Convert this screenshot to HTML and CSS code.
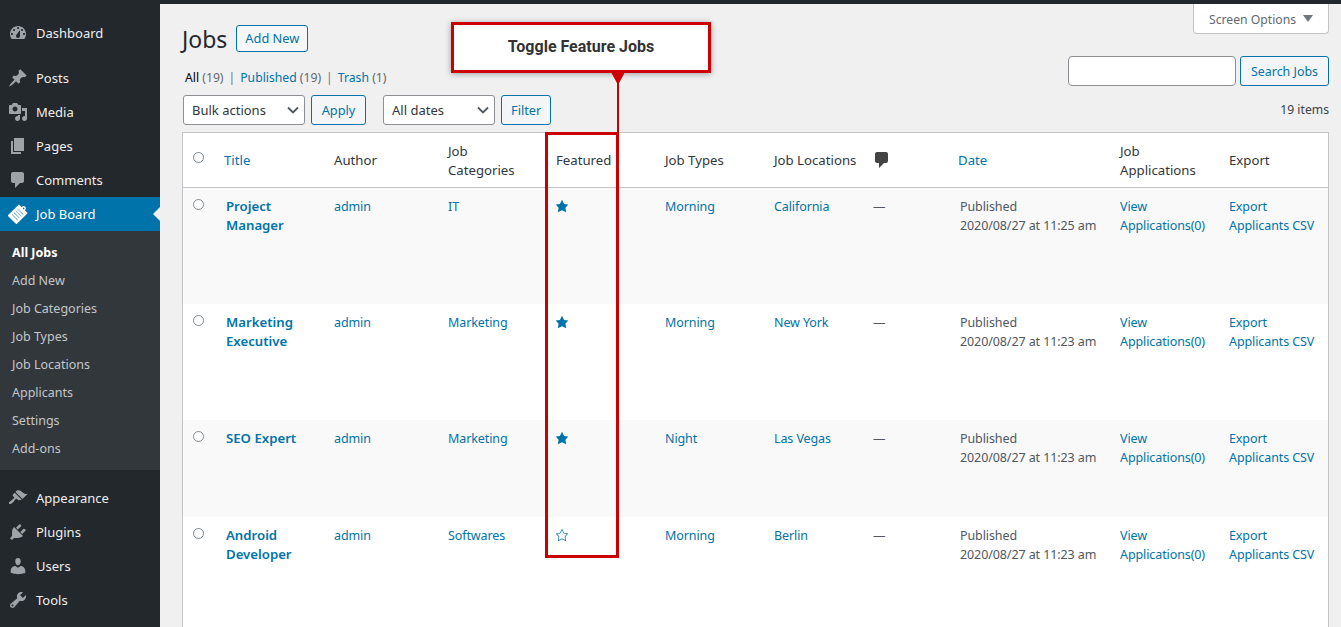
FILE: index.html
```html
<!DOCTYPE html>
<html lang="en">
<head>
<meta charset="utf-8">
<title>Jobs</title>
<link rel="stylesheet" href="styles.css">
</head>
<body>
<div class="adminbar"></div>
<div class="wrap-all">
<aside class="sidebar">
  <ul class="menu">
    <li class="item"><svg class="ic" viewBox="0 0 20 20"><path d="M3.76 16h12.48c1.1-1.37 1.76-3.11 1.76-5 0-4.42-3.58-8-8-8s-8 3.58-8 8c0 1.89.66 3.63 1.76 5zM10 4c.55 0 1 .45 1 1s-.45 1-1 1-1-.45-1-1 .45-1 1-1zM6 6c.55 0 1 .45 1 1s-.45 1-1 1-1-.45-1-1 .45-1 1-1zm8 0c.55 0 1 .45 1 1s-.45 1-1 1-1-.45-1-1 .45-1 1-1zm-5.37 5.55L12 7v6c0 1.1-.9 2-2 2s-2-.9-2-2c0-.57.24-1.08.63-1.45zM4 10c.55 0 1 .45 1 1s-.45 1-1 1-1-.45-1-1 .45-1 1-1zm12 0c.55 0 1 .45 1 1s-.45 1-1 1-1-.45-1-1 .45-1 1-1z"/></svg>Dashboard</li>
  </ul>
  <ul class="menu menu-gap">
    <li class="item"><svg class="ic" viewBox="0 0 20 20"><path d="M10.44 3.02l1.82-1.82 6.36 6.35-1.83 1.82c-1.05-.68-2.48-.57-3.41.36l-.75.75c-.92.93-1.04 2.35-.35 3.41l-1.83 1.82-2.41-2.41-2.8 2.79c-.42.42-3.38 2.71-3.8 2.29s1.86-3.39 2.28-3.81l2.79-2.79L4.1 9.36l1.83-1.82c1.05.69 2.48.57 3.4-.36l.75-.75c.93-.92 1.05-2.35.36-3.41z"/></svg>Posts</li>
    <li class="item"><svg class="ic" viewBox="0 0 20 20"><path d="M13 11V4c0-.55-.45-1-1-1h-1.67L9 1H5L3.67 3H2c-.55 0-1 .45-1 1v7c0 .55.45 1 1 1h10c.55 0 1-.45 1-1zM7 4.5c1.38 0 2.5 1.12 2.5 2.5S8.38 9.5 7 9.5 4.5 8.38 4.5 7 5.62 4.5 7 4.5zM14 6h5v10.5c0 1.38-1.12 2.5-2.5 2.5S14 17.88 14 16.5s1.12-2.5 2.5-2.5c.17 0 .34.02.5.05V9h-3V6zm-4 8.05V13h2v3.5c0 1.38-1.12 2.5-2.5 2.5S7 17.88 7 16.5 8.12 14 9.5 14c.17 0 .34.02.5.05z"/></svg>Media</li>
    <li class="item"><svg class="ic" viewBox="0 0 20 20"><path d="M6 15V2h10v13H6zm-1 1h8v2H3V5h2v11z"/></svg>Pages</li>
    <li class="item"><svg class="ic" viewBox="0 0 20 20"><path d="M5 2h9c1.1 0 2 .9 2 2v7c0 1.1-.9 2-2 2h-2l-5 5v-5H5c-1.1 0-2-.9-2-2V4c0-1.1.9-2 2-2z"/></svg>Comments</li>
    <li class="item current"><svg class="ic" viewBox="0 0 20 20"><g transform="rotate(45 10 10)"><path fill-rule="evenodd" d="M4.6 2.5h3.2V2a2.2 2.2 0 0 1 4.4 0v.5h3.200a.8.8 0 0 1 .8.8v14.400a.8.8 0 0 1-.8.8H4.600a.8.8 0 0 1-.8-.8V3.300a.8.8 0 0 1 .8-.8zM10 1.200a.8.8 0 1 0 0 1.600.8.8 0 0 0 0-1.600zM6 6.500v.4h8v-.4zm0 2.600v.4h8v-.4zm0 2.600v.4h8v-.4zm0 2.600v.4h8v-.4z"/></g></svg>Job Board</li>
  </ul>
  <ul class="submenu">
    <li class="sub active">All Jobs</li>
    <li class="sub">Add New</li>
    <li class="sub">Job Categories</li>
    <li class="sub">Job Types</li>
    <li class="sub">Job Locations</li>
    <li class="sub">Applicants</li>
    <li class="sub">Settings</li>
    <li class="sub">Add-ons</li>
  </ul>
  <ul class="menu menu-gap2">
    <li class="item"><svg class="ic" viewBox="0 0 20 20"><path d="M14.48 11.06L7.41 3.99l1.5-1.5c.5-.56 2.3-.47 3.51.32 1.21.8 1.43 1.28 2.91 2.1 1.18.64 2.45 1.26 4.45.85zm-.71.71L6.7 4.7 4.93 6.47c-.39.39-.39 1.02 0 1.41l1.06 1.06c.39.39.39 1.03 0 1.42-.6.6-1.43 1.11-2.21 1.69-.35.26-.7.53-1.01.84C1.43 13.23.4 14.98 1.2 15.8c.82.81 2.57-.23 3.91-1.57.31-.31.58-.66.84-1.01.58-.78 1.09-1.61 1.69-2.21.39-.39 1.02-.39 1.41 0l1.06 1.06c.39.39 1.02.39 1.41 0z"/></svg>Appearance</li>
    <li class="item"><svg class="ic" viewBox="0 0 20 20"><path d="M13.11 4.36L9.87 7.6 8 5.73l3.24-3.24c.35-.34 1.05-.2 1.56.32.52.51.66 1.21.31 1.55zm-8 1.77l.91-1.12 9.01 9.01-1.19.84c-.71.71-2.63 1.16-3.82 1.16H6.14L4.9 17.26c-.59.59-1.54.59-2.12 0-.59-.58-.59-1.53 0-2.12l1.24-1.24v-3.88c0-1.13.4-3.19 1.09-3.89zm7.26 3.97l3.24-3.24c.34-.35 1.04-.21 1.55.31.52.51.66 1.21.31 1.55l-3.24 3.25z"/></svg>Plugins</li>
    <li class="item"><svg class="ic" viewBox="0 0 20 20"><path d="M10 9.25c-2.27 0-2.73-3.44-2.73-3.44C7 4.02 7.82 2 9.97 2c2.16 0 2.98 2.02 2.71 3.81 0 0-.41 3.44-2.68 3.44zm0 2.57L12.72 10c2.39 0 4.52 2.33 4.52 4.53v2.49s-3.65 1.13-7.24 1.13c-3.65 0-7.24-1.13-7.24-1.13v-2.49c0-2.25 1.94-4.48 4.47-4.48z"/></svg>Users</li>
    <li class="item"><svg class="ic" viewBox="0 0 20 20"><path d="M16.68 9.77c-1.34 1.34-3.3 1.67-4.95.99l-5.41 6.52c-.99.99-2.59.99-3.58 0s-.99-2.59 0-3.57l6.52-5.42c-.68-1.65-.35-3.61.99-4.95 1.28-1.28 3.12-1.62 4.72-1.06l-2.89 2.89 2.82 2.82 2.86-2.87c.53 1.58.18 3.39-1.08 4.65zM3.81 16.21c.4.39 1.04.39 1.43 0 .4-.4.4-1.04 0-1.43-.39-.4-1.03-.4-1.43 0-.39.39-.39 1.03 0 1.43z"/></svg>Tools</li>
  </ul>
</aside>
<main class="content">
  <div class="screen-row"><button class="screen-options">Screen Options<span class="caret"></span></button></div>
  <div class="head-row">
    <h1 class="title">Jobs</h1><a class="add-new">Add New</a>
  </div>
  <div class="sub-row">
    <ul class="views">
      <li><b class="cur">All</b> <span class="cnt">(19)</span></li>
      <li class="sep">|</li>
      <li><a>Published</a> <span class="cnt">(19)</span></li>
      <li class="sep">|</li>
      <li><a>Trash</a> <span class="cnt">(1)</span></li>
    </ul>
    <div class="search"><input class="search-input" type="text" aria-label="Search"><button class="btn search-btn">Search Jobs</button></div>
  </div>
  <div class="nav-row">
    <div class="filters">
      <div class="select sel-bulk">Bulk actions<svg class="chev" viewBox="0 0 16 16"><path d="M3 5.500l5 5 5-5"/></svg></div>
      <button class="btn btn-apply">Apply</button>
      <div class="select sel-dates">All dates<svg class="chev" viewBox="0 0 16 16"><path d="M3 5.500l5 5 5-5"/></svg></div>
      <button class="btn">Filter</button>
    </div>
    <span class="items">19 items</span>
  </div>
  <table class="jobs">
    <thead>
      <tr>
        <th class="c-check"><span class="radio"></span></th>
        <th class="c-title"><a>Title</a></th>
        <th class="c-author">Author</th>
        <th class="c-cat">Job Categories</th>
        <th class="c-feat">Featured</th>
        <th class="c-type">Job Types</th>
        <th class="c-loc">Job Locations</th>
        <th class="c-com"><svg class="com-ic" viewBox="0 0 20 20"><path d="M5 2h9c1.1 0 2 .9 2 2v7c0 1.1-.9 2-2 2h-2l-5 5v-5H5c-1.100 0-2-.9-2-2V4c0-1.100.9-2 2-2z"/></svg></th>
        <th class="c-date"><a>Date</a></th>
        <th class="c-app">Job Applications</th>
        <th class="c-exp">Export</th>
      </tr>
    </thead>
    <tbody>
      <tr class="alt r-tall">
        <td><span class="radio"></span></td>
        <td><a class="job">Project Manager</a></td>
        <td><a>admin</a></td><td><a>IT</a></td>
        <td><svg class="star" viewBox="0 0 20 20"><path d="M10 1l3 6 6 .75-4.12 4.62L16 19l-6-3-6 3 1.13-6.63L1 7.750 7 7z"/></svg></td>
        <td><a>Morning</a></td><td><a>California</a></td><td class="td-com">—</td>
        <td class="td-date">Published<br>2020/08/27 at 11:25 am</td>
        <td><a>View Applications(0)</a></td><td><a>Export Applicants CSV</a></td>
      </tr>
      <tr class="r-tall">
        <td><span class="radio"></span></td>
        <td><a class="job">Marketing Executive</a></td>
        <td><a>admin</a></td><td><a>Marketing</a></td>
        <td><svg class="star" viewBox="0 0 20 20"><path d="M10 1l3 6 6 .75-4.12 4.62L16 19l-6-3-6 3 1.13-6.63L1 7.750 7 7z"/></svg></td>
        <td><a>Morning</a></td><td><a>New York</a></td><td class="td-com">—</td>
        <td class="td-date">Published<br>2020/08/27 at 11:23 am</td>
        <td><a>View Applications(0)</a></td><td><a>Export Applicants CSV</a></td>
      </tr>
      <tr class="alt r-short">
        <td><span class="radio"></span></td>
        <td><a class="job">SEO Expert</a></td>
        <td><a>admin</a></td><td><a>Marketing</a></td>
        <td><svg class="star" viewBox="0 0 20 20"><path d="M10 1l3 6 6 .75-4.12 4.62L16 19l-6-3-6 3 1.13-6.63L1 7.750 7 7z"/></svg></td>
        <td><a>Night</a></td><td><a>Las Vegas</a></td><td class="td-com">—</td>
        <td class="td-date">Published<br>2020/08/27 at 11:23 am</td>
        <td><a>View Applications(0)</a></td><td><a>Export Applicants CSV</a></td>
      </tr>
      <tr class="r-last">
        <td><span class="radio"></span></td>
        <td><a class="job">Android Developer</a></td>
        <td><a>admin</a></td><td><a>Softwares</a></td>
        <td><svg class="star" viewBox="0 0 20 20"><path d="M10 1L7 7l-6 .75 4.130 4.620L4 19l6-3 6 3-1.120-6.630L19 7.750 13 7zm0 2.240l2.340 4.690 4.650.58-3.180 3.560.87 5.150L10 14.880l-4.680 2.340.87-5.150-3.180-3.560 4.650-.58z"/></svg></td>
        <td><a>Morning</a></td><td><a>Berlin</a></td><td class="td-com">—</td>
        <td class="td-date">Published<br>2020/08/27 at 11:23 am</td>
        <td><a>View Applications(0)</a></td><td><a>Export Applicants CSV</a></td>
      </tr>
    </tbody>
  </table>
</main>
</div>
<div class="callout">Toggle Feature Jobs</div>
<div class="pointer"></div>
<div class="pointer-line"></div>
<div class="highlight"></div>
</body>
</html>
```
FILE: styles.css
```css
* { box-sizing: border-box; }
html, body { margin: 0; padding: 0; }
body {
  height: 627px;
  overflow: hidden;
  position: relative;
  background: #f0f0f1;
  color: #3c434a;
  font: 13px/19px "Noto Sans", sans-serif;
}
ul { list-style: none; margin: 0; padding: 0; }
a { color: #0073aa; text-decoration: none; }
.adminbar { height: 4px; background: #23282d; }
.wrap-all { display: flex; height: 623px; }

.sidebar { width: 160px; flex: none; background: #23282d; color: #eee; }
.menu { padding: 0; }
.menu:first-child { margin-top: 12px; }
.menu-gap { margin-top: 11px; }
.menu-gap2 { margin-top: 11px; }
.item {
  position: relative;
  display: flex;
  align-items: center;
  gap: 8px;
  height: 34px;
  padding-left: 8px;
  font-size: 13px;
}
.ic { width: 20px; height: 20px; flex: none; fill: #9ea3a8; }
.current { background: #0073aa; color: #fff; }
.current .ic { fill: #fff; }
.current::after {
  content: "";
  position: absolute;
  right: 0;
  top: 10px;
  border: 7px solid transparent;
  border-right-color: #f0f0f1;
  border-left-width: 0;
}
.submenu { background: #32373c; padding: 8px 0 7px; }
.sub { height: 28px; line-height: 28px; padding-left: 12px; color: #c3c6c9; font-size: 12.5px; }
.active { color: #fff; font-weight: 700; }

.content { flex: 1; min-width: 0; padding: 0 12px 0 22px; position: relative; }
.screen-row { display: flex; justify-content: flex-end; height: 0; }
.screen-options {
  width: 136px;
  height: 30px;
  background: #fff;
  border: 1px solid #c3c4c7;
  border-top: 0;
  border-radius: 0 0 4px 4px;
  color: #646970;
  font: 12.2px "Noto Sans", sans-serif;
  padding: 1px 0 0;
  display: flex;
  align-items: center;
  justify-content: center;
  gap: 7px;
}
.caret { border: 5px solid transparent; border-top: 7px solid #72777c; border-bottom: 0; margin-top: -1px; }
.head-row { display: flex; align-items: center; gap: 9px; padding-top: 22px; height: 48px; }
.title { margin: 0; font: 400 23px/27px "Noto Sans", sans-serif; color: #23282d; }
.add-new {
  height: 27px; line-height: 25px; padding: 0 8px; margin-top: -2px;
  border: 1px solid #0073aa; border-radius: 3px;
  background: #f6f7f7; color: #0073aa; font-size: 12.8px;
}
.sub-row { display: flex; justify-content: space-between; align-items: flex-start; padding-top: 3px; height: 38px; }
.views { display: flex; gap: 5px; padding: 13px 0 0 3px; font-size: 12.2px; line-height: 19px; }
.cur { font-weight: 400; color: #000; }
.cnt { color: #646970; }
.sep { color: #72777c; }
.search { display: flex; gap: 4px; padding-top: 1px; }
.search-input { width: 168px; height: 30px; border: 1px solid #8c8f94; border-radius: 4px; background: #fff; padding: 0; }
.btn {
  height: 30px; padding: 0 9px;
  border: 1px solid #0073aa; border-radius: 3px;
  background: #f3f5f6; color: #0073aa;
  font: 12.8px "Noto Sans", sans-serif;
}
.btn-apply { width: 55px; padding: 0; }
.search-btn { width: 89px; padding: 0; font-size: 12.4px; }
.nav-row { display: flex; justify-content: space-between; align-items: center; height: 30px; margin-top: 5px; }
.filters { display: flex; align-items: center; gap: 6px; padding-left: 1px; }
.select {
  display: flex; align-items: center; justify-content: space-between;
  height: 30px; padding: 0 3px 0 8px;
  border: 1px solid #8c8f94; border-radius: 3px;
  background: #fff; color: #32373c; font-size: 13px;
}
.sel-bulk { width: 122px; }
.sel-dates { width: 112px; margin-left: 11px; }
.chev { width: 16px; height: 16px; fill: none; stroke: #50575e; stroke-width: 1.8; }
.items { color: #3c434a; font-size: 12.2px; margin-top: -2px; }

.jobs {
  table-layout: fixed;
  width: 1147px;
  margin-top: 7px;
  border-collapse: separate;
  border-spacing: 0;
  background: #fff;
  border: 1px solid #c3c4c7;
  border-bottom: 0;
  font-size: 13px;
  line-height: 19px;
}
.jobs th {
  height: 55px;
  padding: 0 10px;
  font-weight: 400;
  font-size: 13.2px;
  text-align: left;
  color: #32373c;
  border-bottom: 1px solid #c3c4c7;
}
.jobs td {
  padding: 9px 0 0 10px;
  vertical-align: top;
  color: #50575e;
  font-size: 12.5px;
  letter-spacing: -.1px;
}
.c-check { width: 31px; }
.c-title { width: 110px; }
.c-author { width: 114px; }
.c-cat { width: 108px; }
.c-feat { width: 109px; }
.c-type { width: 109px; }
.c-loc { width: 98px; white-space: nowrap; }
.c-com { width: 86px; }
.c-date { width: 162px; }
.c-app { width: 109px; }
.c-exp { width: 109px; }
.jobs th.c-cat, .jobs th.c-app { padding-top: 2px; }
.jobs th.c-check, .jobs td:first-child { padding: 0 0 0 10px; }
.jobs th.c-check { vertical-align: top; padding-top: 19px; }
.jobs td:first-child { padding-top: 11px; }
.jobs td.td-date { padding-left: 12px; }
.jobs td.td-com { padding-left: 11px; }
.radio { display: block; width: 11px; height: 11px; border: 1px solid #7e8993; border-radius: 50%; background: #fff; }
.alt { background: #f9f9f9; }
.r-tall { height: 116px; }
.r-short { height: 97px; }
.r-last { height: 120px; }
.job { display: block; font-weight: 600; padding-left: 2px; font-size: 13.2px; letter-spacing: 0; }
.com-ic { width: 20px; height: 20px; display: block; fill: #444; }
.star { width: 14px; height: 14px; display: block; margin: 2px 0 0 -1px; fill: #0073aa; }

.callout {
  position: absolute; left: 451px; top: 22px; width: 260px; height: 51px;
  background: #fff; border: 3px solid #c00;
  box-shadow: 0 1px 6px rgba(0,0,0,.35);
  color: #333; font: 700 16px/43px Roboto, sans-serif;
  text-align: center;
}
.pointer {
  position: absolute; left: 611px; top: 72px;
  border-left: 7px solid transparent; border-right: 7px solid transparent;
  border-top: 13px solid #c00;
}
.pointer-line { position: absolute; left: 617px; top: 80px; width: 2px; height: 54px; background: #c00; }
.highlight { position: absolute; left: 545px; top: 132px; width: 74px; height: 426px; border: 3px solid #c00; }
```
